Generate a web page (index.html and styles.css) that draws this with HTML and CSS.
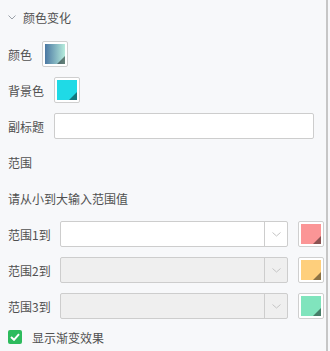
FILE: index.html
```html
<!DOCTYPE html>
<html lang="zh-CN">
<head>
    <meta charset="UTF-8">
    <meta name="viewport" content="width=device-width, initial-scale=1.0">
    <title>颜色变化</title>
    <link rel="stylesheet" href="styles.css">
</head>
<body>
    <div class="panel">
        <!-- Section header -->
        <div class="row header">
            <svg class="chevron" width="8" height="5" viewBox="0 0 8 5">
                <path d="M0.5 0.5 L4 4 L7.5 0.5" fill="none" stroke="#9aa0a8" stroke-width="1"/>
            </svg>
            <span>颜色变化</span>
        </div>

        <div class="row">
            <label class="label">颜色</label>
            <div class="swatch"><div class="swatch-fill gradient"></div></div>
        </div>

        <div class="row">
            <label class="label">背景色</label>
            <div class="swatch"><div class="swatch-fill" style="background-color: #1fdae6;"></div></div>
        </div>

        <div class="row">
            <label class="label" for="subtitle">副标题</label>
            <input type="text" id="subtitle" class="text-input">
        </div>

        <div class="row">范围</div>
        <div class="row">请从小到大输入范围值</div>

        <!-- Range rows -->
        <div class="row range-row">
            <label class="label">范围1到</label>
            <div class="combo">
                <div class="combo-text"></div>
                <div class="combo-arrow">
                    <svg width="9" height="5" viewBox="0 0 9 5"><path d="M0.5 0.5 L4.5 4 L8.5 0.5" fill="none" stroke="#c4c4c4" stroke-width="1"/></svg>
                </div>
            </div>
            <div class="swatch"><div class="swatch-fill" style="background-color: #fb9596;"></div></div>
        </div>

        <div class="row range-row">
            <label class="label">范围2到</label>
            <div class="combo disabled">
                <div class="combo-text"></div>
                <div class="combo-arrow">
                    <svg width="9" height="5" viewBox="0 0 9 5"><path d="M0.5 0.5 L4.5 4 L8.5 0.5" fill="none" stroke="#c4c4c4" stroke-width="1"/></svg>
                </div>
            </div>
            <div class="swatch"><div class="swatch-fill" style="background-color: #fecf7c;"></div></div>
        </div>

        <div class="row range-row">
            <label class="label">范围3到</label>
            <div class="combo disabled">
                <div class="combo-text"></div>
                <div class="combo-arrow">
                    <svg width="9" height="5" viewBox="0 0 9 5"><path d="M0.5 0.5 L4.5 4 L8.5 0.5" fill="none" stroke="#c4c4c4" stroke-width="1"/></svg>
                </div>
            </div>
            <div class="swatch"><div class="swatch-fill" style="background-color: #80e4bd;"></div></div>
        </div>

        <div class="row check-row">
            <span class="checkbox">
                <svg width="10" height="8" viewBox="0 0 10 8"><path d="M1 4 L4 6.8 L9 1.2" fill="none" stroke="#fff" stroke-width="2"/></svg>
            </span>
            <span>显示渐变效果</span>
        </div>
    </div>
</body>
</html>
```

FILE: styles.css
```css
body {
    margin: 0;
    background-color: #f7f8fa;
    font-family: "Noto Sans CJK SC", "Noto Sans", sans-serif;
    font-size: 12px;
    color: #505050;
}

.panel {
    width: 328px;
    height: 351px;
    border-right: 2px solid #c6c6c6;
    padding-left: 8px;
    box-sizing: border-box;
}

.row {
    display: flex;
    align-items: center;
    height: 36px;
}

.header {
    height: 34px;
    padding-bottom: 2px;
}

.chevron {
    margin-right: 7px;
}

.label {
    margin-right: 10px;
    white-space: nowrap;
}

.range-row .label {
    width: 42px;
    flex-shrink: 0;
}

.swatch {
    width: 26px;
    height: 26px;
    box-sizing: border-box;
    border: 1px solid #cfcfcf;
    border-radius: 2px;
    background-color: #fff;
    padding: 2px;
    flex-shrink: 0;
}

.swatch-fill {
    width: 20px;
    height: 20px;
    position: relative;
    overflow: hidden;
}

/* darker corner triangle on each swatch */
.swatch-fill::after {
    content: "";
    position: absolute;
    right: 0;
    bottom: 0;
    border-style: solid;
    border-width: 0 0 8px 8px;
    border-color: transparent transparent rgba(0, 0, 0, 0.45) transparent;
}

.gradient {
    background: linear-gradient(90deg, #4b78a3, #b6ecdc);
}

.text-input {
    width: 260px;
    height: 26px;
    box-sizing: border-box;
    border: 1px solid #cdcdcd;
    border-radius: 2px;
    background-color: #fff;
    margin: 0;
    padding: 0 6px;
}

.combo {
    display: flex;
    width: 228px;
    height: 26px;
    box-sizing: border-box;
    border: 1px solid #cdcdcd;
    border-radius: 2px;
    background-color: #fff;
    margin-right: 10px;
    flex-shrink: 0;
}

.combo.disabled {
    background-color: #efefef;
}

.combo-text {
    flex: 1;
}

.combo-arrow {
    width: 22px;
    border-left: 1px solid #cdcdcd;
    display: flex;
    align-items: center;
    justify-content: center;
}

.check-row {
    height: 26px;
}

.checkbox {
    width: 14px;
    height: 14px;
    border-radius: 2px;
    background-color: #2dbb5d;
    display: flex;
    align-items: center;
    justify-content: center;
    margin-right: 10px;
}
```
